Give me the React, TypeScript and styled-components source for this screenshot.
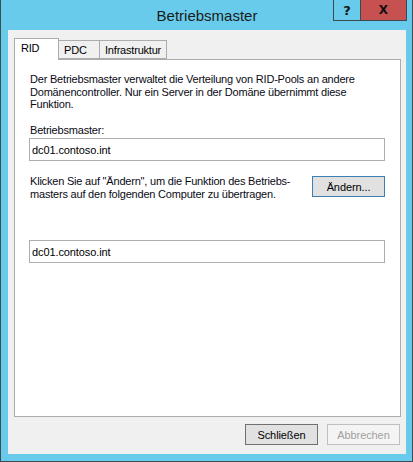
import React from "react";
import styled, { createGlobalStyle } from "styled-components";

const GlobalStyle = createGlobalStyle`
  html, body {
    margin: 0;
    padding: 0;
    background: #68cbeb;
  }
  * {
    box-sizing: border-box;
  }
`;

const FONT = `"Liberation Sans", Arial, sans-serif`;

export default function App() {
  return (
    <>
      <GlobalStyle />
      <Window>
        <TitleBar>
          <Title>Betriebsmaster</Title>
          <Caption>
            <CaptionButton>?</CaptionButton>
            <CaptionButton $close>X</CaptionButton>
          </Caption>
        </TitleBar>
        <Client>
          <TabStrip>
            <Tab $active $width={45}>RID</Tab>
            <Tab $width={41}>PDC</Tab>
            <Tab $width={67}>Infrastruktur</Tab>
          </TabStrip>
          <Panel>
            <Text>
              Der Betriebsmaster verwaltet die Verteilung von RID-Pools an andere
              <br />
              Domänencontroller. Nur ein Server in der Domäne übernimmt diese
              <br />
              Funktion.
            </Text>
            <Label>Betriebsmaster:</Label>
            <Field>dc01.contoso.int</Field>
            <ChangeRow>
              <Text>
                Klicken Sie auf "Ändern", um die Funktion des Betriebs-
                <br />
                masters auf den folgenden Computer zu übertragen.
              </Text>
              <Button $default>Ändern...</Button>
            </ChangeRow>
            <TargetField>dc01.contoso.int</TargetField>
          </Panel>
          <Footer>
            <Button $pressed>Schließen</Button>
            <Button $disabled>Abbrechen</Button>
          </Footer>
        </Client>
      </Window>
    </>
  );
}

const Window = styled.div`
  width: 413px;
  height: 462px;
  background: #68cbeb;
  border: 1px solid #3d4b52;
  border-top: none;
  display: flex;
  flex-direction: column;
  font-family: ${FONT};
`;

const TitleBar = styled.div`
  height: 30px;
  display: grid;
  grid-template-columns: 1fr;
`;

const Title = styled.div`
  grid-area: 1 / 1;
  align-self: center;
  justify-self: center;
  margin-left: 1px;
  margin-top: 1px;
  font-family: ${FONT};
  font-size: 15px;
  color: #1b1b1b;
`;

const Caption = styled.div`
  grid-area: 1 / 1;
  justify-self: end;
  align-self: start;
  display: flex;
  margin-right: 5px;
`;

const CaptionButton = styled.div<{ $close?: boolean }>`
  width: ${(p) => (p.$close ? "46px" : "28px")};
  height: 21px;
  display: flex;
  align-items: center;
  justify-content: center;
  border: 1px solid #3a4a52;
  border-top: none;
  border-left: ${(p) => (p.$close ? "none" : "1px solid #3a4a52")};
  background: ${(p) => (p.$close ? "#c75050" : "#68cbeb")};
  color: #111;
  font-family: "DejaVu Sans", ${FONT};
  font-weight: bold;
  font-size: ${(p) => (p.$close ? "12px" : "13px")};
`;

const Client = styled.div`
  flex: 1;
  margin: 0 6px 7px 7px;
  background: #f0f0f0;
  padding: 8px 5px 0 6px;
  display: flex;
  flex-direction: column;
`;

const TabStrip = styled.div`
  display: flex;
  align-items: flex-end;
  height: 22px;
  margin-bottom: -1px;
  position: relative;
  z-index: 1;
`;

const Tab = styled.div<{ $active?: boolean; $width: number }>`
  width: ${(p) => p.$width}px;
  height: ${(p) => (p.$active ? "22px" : "19px")};
  padding: ${(p) => (p.$active ? "2px 0 0 6px" : "2px 0 0 5px")};
  border: 1px solid #acacac;
  border-bottom: ${(p) => (p.$active ? "none" : "1px solid #acacac")};
  border-left: ${(p) => (p.$active ? "1px solid #acacac" : "none")};
  background: ${(p) => (p.$active ? "#ffffff" : "#f0f0f0")};
  font-size: 11px;
  letter-spacing: -0.2px;
  white-space: nowrap;
  line-height: 15px;
  color: #000;
  margin-bottom: ${(p) => (p.$active ? "0" : "1px")};
`;

const Panel = styled.div`
  height: 358px;
  background: #fff;
  border: 1px solid #acacac;
  padding: 13px 15px 0 15px;
  display: flex;
  flex-direction: column;
`;

const Text = styled.div`
  font-size: 11px;
  line-height: 12.5px;
  color: #0a0a14;
  letter-spacing: -0.2px;
  white-space: nowrap;
`;

const Label = styled(Text)`
  margin-top: 13px;
  margin-bottom: 2px;
`;

const Field = styled.div`
  height: 23px;
  margin-left: -1px;
  border: 1px solid #abadb3;
  padding: 0 0 0 2px;
  display: flex;
  align-items: center;
  font-size: 11px;
  letter-spacing: -0.1px;
  color: #000;
  background: #fff;
`;

const TargetField = styled(Field)`
  margin-top: 40px;
`;

const ChangeRow = styled.div`
  display: flex;
  align-items: flex-start;
  justify-content: space-between;
  margin-top: 14px;
`;

const Button = styled.div<{ $default?: boolean; $pressed?: boolean; $disabled?: boolean }>`
  width: 73px;
  height: 21px;
  flex-shrink: 0;
  display: flex;
  align-items: center;
  justify-content: center;
  font-size: 11px;
  letter-spacing: -0.1px;
  margin-top: ${(p) => (p.$default ? "1px" : "0")};
  border: 1px solid
    ${(p) => (p.$default ? "#3c7fb1" : p.$disabled ? "#bfbfbf" : "#707070")};
  background: ${(p) => (p.$disabled ? "#f4f4f4" : "#e1e1e1")};
  color: ${(p) => (p.$disabled ? "#a0a0a0" : "#000")};
`;

const Footer = styled.div`
  display: flex;
  justify-content: flex-end;
  gap: 9px;
  margin-top: 7px;
  padding-right: 1px;
`;
